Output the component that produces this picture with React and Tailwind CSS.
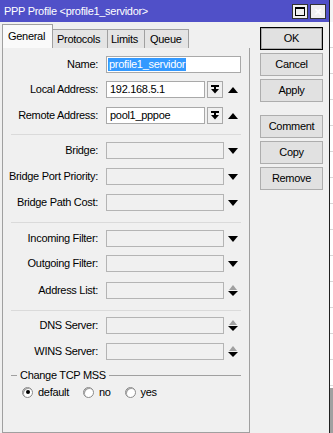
import React from 'react';

const font = { fontFamily: '"Liberation Sans", Arial, sans-serif' };

const DropArrow = () => (
  <svg width="10" height="6" viewBox="0 0 10 6" className="shrink-0">
    <path d="M0 0 H10 L5 6 Z" fill="#000" />
  </svg>
);

const UpArrow = () => (
  <svg width="10" height="6" viewBox="0 0 10 6" className="shrink-0">
    <path d="M0 6 H10 L5 0 Z" fill="#000" />
  </svg>
);

const UpDown = () => (
  <svg width="10" height="14" viewBox="0 0 10 14" className="shrink-0">
    <path d="M1 6 H9 L5 1 Z" fill="#a0a0a0" />
    <path d="M0 7 H10 L5 12 Z" fill="#000" />
  </svg>
);

const Label = ({ children }) => (
  <div className="w-[96px] shrink-0 text-right pr-[1px]">{children}</div>
);

const Separator = () => <div className="h-px bg-[#dadada] ml-[8px] mr-[8px]" />;

// a disabled field with the icon next to it
const EmptyRow = ({ label, icon }) => (
  <div className="flex items-center h-[17px]">
    <Label>{label}</Label>
    <div className="ml-[7px] w-[118px] h-[17px] border border-[#b4b4b4] bg-[#f0f0f0]" />
    <div className="ml-[4px] w-[10px] flex justify-center">{icon}</div>
  </div>
);

const AddrRow = ({ label, value }) => (
  <div className="flex items-center h-[17px]">
    <Label>{label}</Label>
    <div className="ml-[7px] w-[99px] h-[17px] border border-[#a9a9a9] bg-white pl-[3px] leading-[15px]">
      {value}
    </div>
    <div className="ml-[2px] w-[16px] h-[17px] border border-[#a9a9a9] bg-[#f0f0f0] flex items-center justify-center">
      <svg width="8" height="9" viewBox="0 0 8 9">
        <rect x="0" y="0" width="8" height="2" fill="#000" />
        <rect x="3" y="2" width="2" height="3" fill="#000" />
        <path d="M0 4 H8 L4 8.5 Z" fill="#000" />
      </svg>
    </div>
    <div className="ml-[5px] w-[10px] flex justify-center">
      <UpArrow />
    </div>
  </div>
);

const Btn = ({ children, def }) => (
  <div
    className={`h-[23px] w-[63px] flex items-center justify-center bg-[#e1e1e1] ${
      def ? 'border border-[#000] shadow-[inset_0_0_0_1px_#adadad]' : 'border border-[#adadad]'
    }`}
  >
    {children}
  </div>
);

const Radio = ({ checked, label }) => (
  <div className="flex items-center gap-[5px]">
    <div className="w-[11px] h-[11px] rounded-full border border-[#8a8a8a] bg-white flex items-center justify-center shadow-[inset_1px_1px_0_#a0a0a0]">
      {checked && <div className="w-[4px] h-[4px] rounded-full bg-black" />}
    </div>
    <span>{label}</span>
  </div>
);

export default function App() {
  return (
    <div
      className="w-[333px] h-[433px] flex overflow-hidden bg-[#f0f0f0] text-[11px] tracking-[-0.3px] text-black"
      style={font}
    >
      <div className="w-[329px] flex flex-col">
        {/* title bar */}
        <div className="h-[22px] bg-[#5050c8] flex items-center pl-[4px] pr-[3px] text-white text-[11px]">
          <span className="flex-1">PPP Profile &lt;profile1_servidor&gt;</span>
          <div className="flex gap-[2px]">
            <div className="w-[16px] h-[15px] bg-[#f0f0f0] border border-[#333] flex items-center justify-center">
              <div className="w-[10px] h-[9px] border border-black border-t-2" />
            </div>
            <div className="w-[16px] h-[15px] bg-[#f0f0f0] border border-[#333] flex items-center justify-center text-[13px] font-bold leading-none tracking-normal">
              ×
            </div>
          </div>
        </div>

        <div className="flex flex-1">
          {/* tabs + panel */}
          <div className="w-[250px] pl-[2px] flex flex-col pt-[2px]">
            <div className="flex items-end h-[24px]">
              <div className="w-[51px] h-[24px] bg-[#fafafa] border border-b-0 border-[#a0a0a0] pl-[5px] pt-[3px]">
                General
              </div>
              <div className="w-[55px] h-[19px] bg-[#e4e4e4] border border-l-0 border-b-0 border-[#a0a0a0] pl-[4px] pt-[1px]">
                Protocols
              </div>
              <div className="w-[37px] h-[19px] bg-[#e4e4e4] border border-l-0 border-b-0 border-[#a0a0a0] pl-[3px] pt-[1px]">
                Limits
              </div>
              <div className="w-[44px] h-[19px] bg-[#e4e4e4] border border-l-0 border-b-0 border-[#a0a0a0] pl-[5px] pt-[1px]">
                Queue
              </div>
            </div>
            <div className="flex-1 border border-t-0 border-[#a0a0a0] bg-[#f0f0f0] flex flex-col pt-[8px]">
              <div className="flex items-center h-[17px]">
                <Label>Name:</Label>
                <div className="ml-[7px] w-[135px] h-[17px] border border-[#a9a9a9] bg-white pl-[1px] flex items-center">
                  <span className="bg-[#3399ff] text-white leading-[13px] px-[1px]">profile1_servidor</span>
                </div>
              </div>
              <div className="h-[8px]" />
              <AddrRow label="Local Address:" value="192.168.5.1" />
              <div className="h-[9px]" />
              <AddrRow label="Remote Address:" value="pool1_pppoe" />

              <div className="h-[10px]" />
              <Separator />
              <div className="h-[7px]" />
              <EmptyRow label="Bridge:" icon={<DropArrow />} />
              <div className="h-[9px]" />
              <EmptyRow label="Bridge Port Priority:" icon={<DropArrow />} />
              <div className="h-[9px]" />
              <EmptyRow label="Bridge Path Cost:" icon={<DropArrow />} />

              <div className="h-[11px]" />
              <Separator />
              <div className="h-[7px]" />
              <EmptyRow label="Incoming Filter:" icon={<DropArrow />} />
              <div className="h-[8px]" />
              <EmptyRow label="Outgoing Filter:" icon={<DropArrow />} />
              <div className="h-[10px]" />
              <EmptyRow label="Address List:" icon={<UpDown />} />

              <div className="h-[11px]" />
              <Separator />
              <div className="h-[6px]" />
              <EmptyRow label="DNS Server:" icon={<UpDown />} />
              <div className="h-[9px]" />
              <EmptyRow label="WINS Server:" icon={<UpDown />} />

              <div className="h-[8px]" />
              <div className="flex items-center h-[14px] pl-[8px] pr-[8px] gap-[3px]">
                <div className="w-[6px] h-px bg-[#a0a0a0]" />
                <span>Change TCP MSS</span>
                <div className="flex-1 h-px bg-[#a0a0a0]" />
              </div>
              <div className="flex items-center gap-[14px] pl-[19px] mt-[2px] h-[16px]">
                <Radio checked label="default" />
                <Radio label="no" />
                <Radio label="yes" />
              </div>
            </div>
          </div>

          {/* button column */}
          <div className="flex-1 flex flex-col pl-[10px] pt-[5px] gap-[3px]">
            <Btn def>OK</Btn>
            <Btn>Cancel</Btn>
            <Btn>Apply</Btn>
            <div className="h-[7px]" />
            <Btn>Comment</Btn>
            <Btn>Copy</Btn>
            <Btn>Remove</Btn>
          </div>
        </div>
      </div>

      {/* edge of the window behind */}
      <div className="flex-1 flex flex-col bg-white border-l border-[#202020]">
        <div className="h-[22px] bg-[#f4f4f4]" />
        <div className="flex-1 flex flex-col">
          {Array.from({ length: 14 }).map((_, i) => (
            <div key={i} className="h-[26px] border-b border-[#d8d8d8]" />
          ))}
        </div>
        <div className="h-[45px] bg-[#a0a0a0]" />
      </div>
    </div>
  );
}
